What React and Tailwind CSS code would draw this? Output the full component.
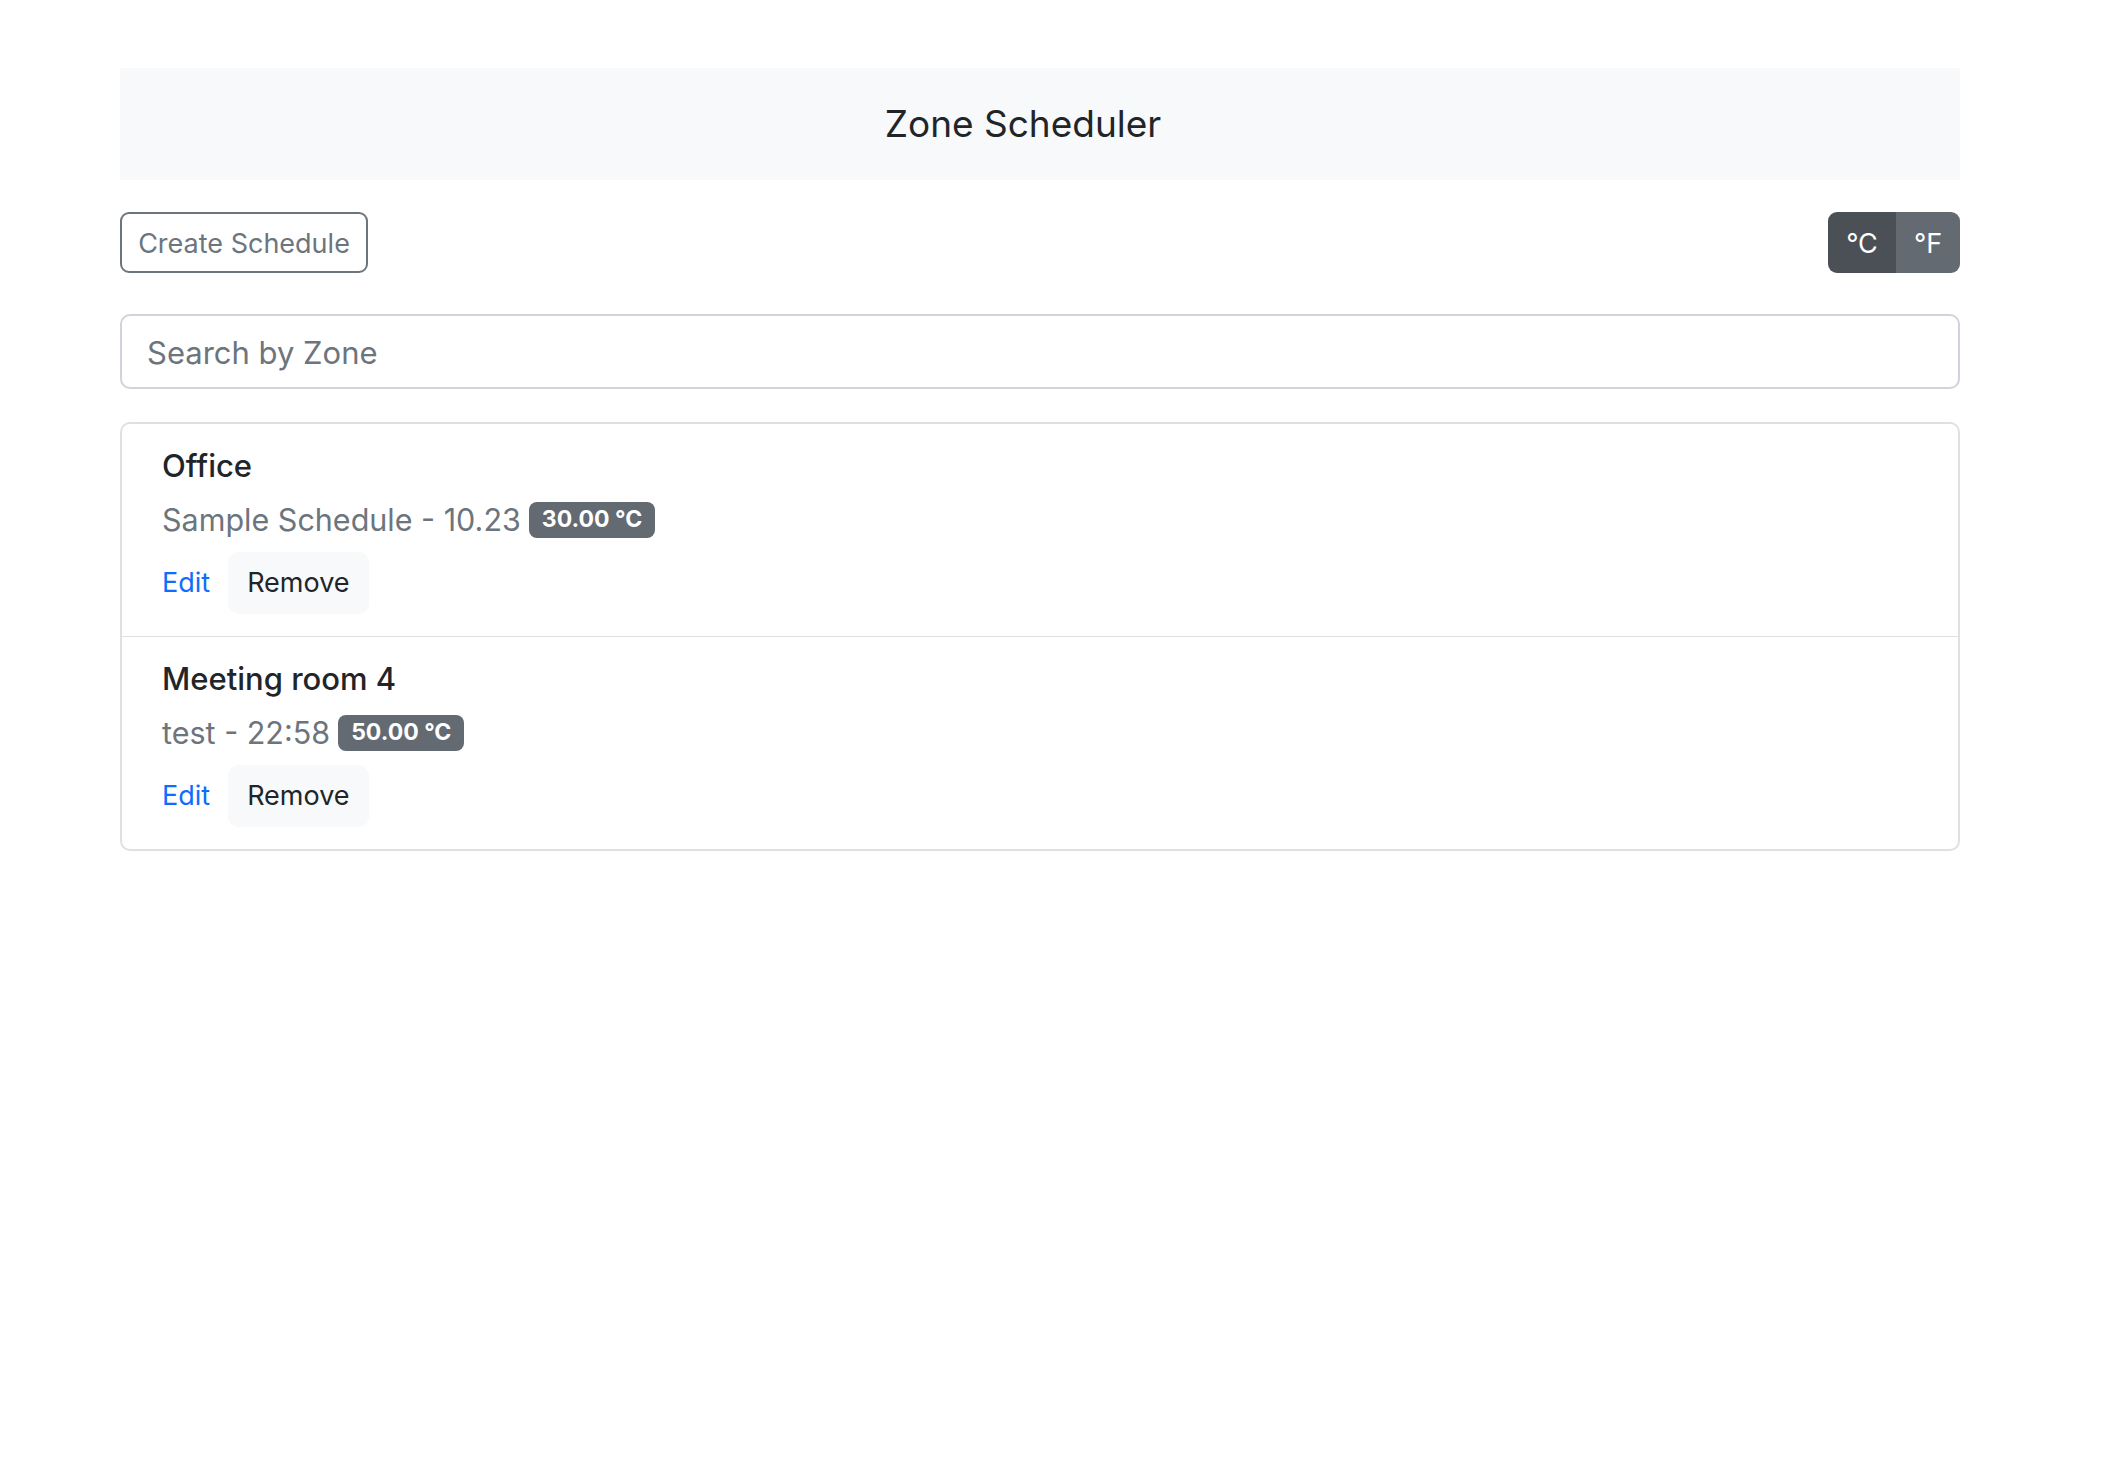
import { useState } from "react";

const schedules = [
  { id: 1, zone: "Office", name: "Sample Schedule", time: "10.23", temp: 30 },
  { id: 2, zone: "Meeting room 4", name: "test", time: "22:58", temp: 50 },
];

function ScheduleItem({ item, unit, first }) {
  const value = unit === "C" ? item.temp : item.temp * 1.8 + 32;
  return (
    <div className={`pt-[23px] pb-[22px] pl-[40px] pr-[40px] ${first ? "" : "border-t border-[#dfdfdf]"}`}>
      <h5 className="h-[38px] leading-[38px] text-[31px] font-medium text-[#212529]">{item.zone}</h5>
      <div className="mt-[12px] h-[45px] flex items-center gap-[8px]">
        <span className="text-[30.5px] text-[#6c757d]">
          {item.name} - {item.time}
        </span>
        <span className="h-[36px] px-[13px] flex items-center rounded-[8px] bg-[#636a72] text-white text-[23px] font-bold">
          {value.toFixed(2)} °{unit}
        </span>
      </div>
      <div className="mt-[10px] flex items-center">
        <button className="h-[62px] text-[27px] text-[#0d6efd]">Edit</button>
        <button className="ml-[18px] h-[62px] px-[19px] rounded-[10px] bg-[#f8f9fa] text-[27px] text-[#212529]">
          Remove
        </button>
      </div>
    </div>
  );
}

export default function App() {
  const [unit, setUnit] = useState("C");
  const [query, setQuery] = useState("");

  const filtered = schedules.filter((s) =>
    s.zone.toLowerCase().includes(query.toLowerCase())
  );

  return (
    <div className="min-h-screen bg-white font-['Inter','Liberation_Sans',sans-serif]">
      <div className="w-[1840px] ml-[120px] pt-[68px]">
        <div className="h-[112px] bg-[#f8f9fa] flex items-center justify-center pr-[34px]">
          <h1 className="text-[37px] text-[#212529]">Zone Scheduler</h1>
        </div>

        <div className="mt-[32px] h-[61px] flex justify-between">
          <button className="h-[61px] w-[248px] pt-[3px] border-2 border-[#6c757d] rounded-[9px] text-[27px] text-[#6c757d]">
            Create Schedule
          </button>
          <div className="flex h-[61px] rounded-[9px] overflow-hidden">
            <button
              onClick={() => setUnit("C")}
              className="w-[68px] h-full pt-[3px] bg-[#4a5056] text-white text-[27px]"
            >
              °C
            </button>
            <button
              onClick={() => setUnit("F")}
              className="w-[64px] h-full pt-[3px] bg-[#636a72] text-white text-[27px]"
            >
              °F
            </button>
          </div>
        </div>

        <input
          value={query}
          onChange={(e) => setQuery(e.target.value)}
          placeholder="Search by Zone"
          className="mt-[41px] block w-full h-[75px] px-[25px] pt-[2px] border-2 border-[#ced4da] rounded-[10px] text-[31px] text-[#212529] placeholder:text-[#6c757d] outline-none"
        />

        <div className="mt-[33px] border-2 border-[#e0e0e0] rounded-[10px]">
          {filtered.map((item, i) => (
            <ScheduleItem key={item.id} item={item} unit={unit} first={i === 0} />
          ))}
        </div>
      </div>
    </div>
  );
}
